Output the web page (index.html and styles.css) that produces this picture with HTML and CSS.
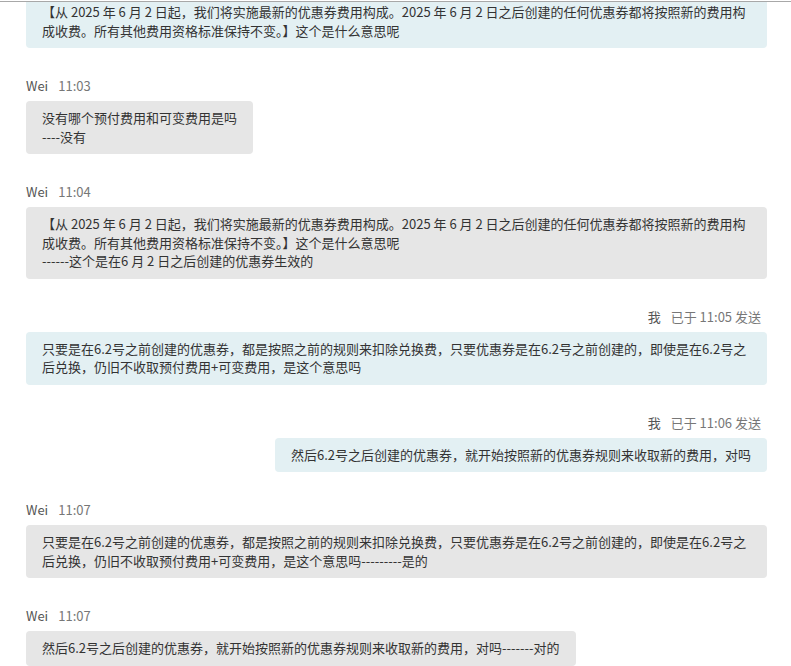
FILE: index.html
```html
<html>

<head>
	<link rel="stylesheet" href="styles.css">
</head>

<body>
	<div class="chat">
		<div class="messages">
			<div class="msg me">
				<div class="bubble">【从 2025 年 6 月 2 日起，我们将实施最新的优惠券费用构成。2025 年 6 月 2 日之后创建的任何优惠券都将按照新的费用构成收费。所有其他费用资格标准保持不变。】这个是什么意思呢</div>
			</div>

			<div class="msg">
				<div class="meta"><span class="name">Wei</span><span class="time">11:03</span></div>
				<div class="bubble">没有哪个预付费用和可变费用是吗<br>----没有</div>
			</div>

			<div class="msg">
				<div class="meta"><span class="name">Wei</span><span class="time">11:04</span></div>
				<div class="bubble">【从 2025 年 6 月 2 日起，我们将实施最新的优惠券费用构成。2025 年 6 月 2 日之后创建的任何优惠券都将按照新的费用构成收费。所有其他费用资格标准保持不变。】这个是什么意思呢<br>------这个是在6 月 2 日之后创建的优惠券生效的</div>
			</div>

			<div class="msg me">
				<div class="meta"><span class="name">我</span><span class="time">已于 11:05 发送</span></div>
				<div class="bubble">只要是在6.2号之前创建的优惠券，都是按照之前的规则来扣除兑换费，只要优惠券是在6.2号之前创建的，即使是在6.2号之后兑换，仍旧不收取预付费用+可变费用，是这个意思吗</div>
			</div>

			<div class="msg me">
				<div class="meta"><span class="name">我</span><span class="time">已于 11:06 发送</span></div>
				<div class="bubble">然后6.2号之后创建的优惠券，就开始按照新的优惠券规则来收取新的费用，对吗</div>
			</div>

			<div class="msg">
				<div class="meta"><span class="name">Wei</span><span class="time">11:07</span></div>
				<div class="bubble">只要是在6.2号之前创建的优惠券，都是按照之前的规则来扣除兑换费，只要优惠券是在6.2号之前创建的，即使是在6.2号之后兑换，仍旧不收取预付费用+可变费用，是这个意思吗---------是的</div>
			</div>

			<div class="msg">
				<div class="meta"><span class="name">Wei</span><span class="time">11:07</span></div>
				<div class="bubble">然后6.2号之后创建的优惠券，就开始按照新的优惠券规则来收取新的费用，对吗-------对的</div>
			</div>
		</div>
	</div>
</body>

</html>
```

FILE: styles.css
```css
body {
	margin: 0;
	background-color: #fff;
	font-family: "Noto Sans CJK SC", "Noto Sans", sans-serif;
	font-size: 13px;
	color: #333;
	overflow: hidden;
}

.chat {
	margin-top: 1px;
	height: 665px;
	border-top: 1px solid #a8a8a8;
	overflow: hidden;
}

.messages {
	display: flex;
	flex-direction: column;
	gap: 28px;
	margin-top: -7px;
	padding: 0 24px 0 26px;
}

.msg {
	display: flex;
	flex-direction: column;
	align-items: flex-start;
}

.msg.me {
	align-items: flex-end;
}

.meta {
	display: flex;
	gap: 10px;
	height: 20px;
	line-height: 20px;
	margin-bottom: 5px;
}

.msg.me .meta {
	padding-right: 6px;
}

.name {
	color: #555;
}

.time {
	color: #777;
}

.bubble {
	padding: 8px 16px;
	line-height: 18.5px;
	background-color: #e6e6e6;
	border-radius: 4px;
}

.msg.me .bubble {
	background-color: #e3f0f3;
}
```
